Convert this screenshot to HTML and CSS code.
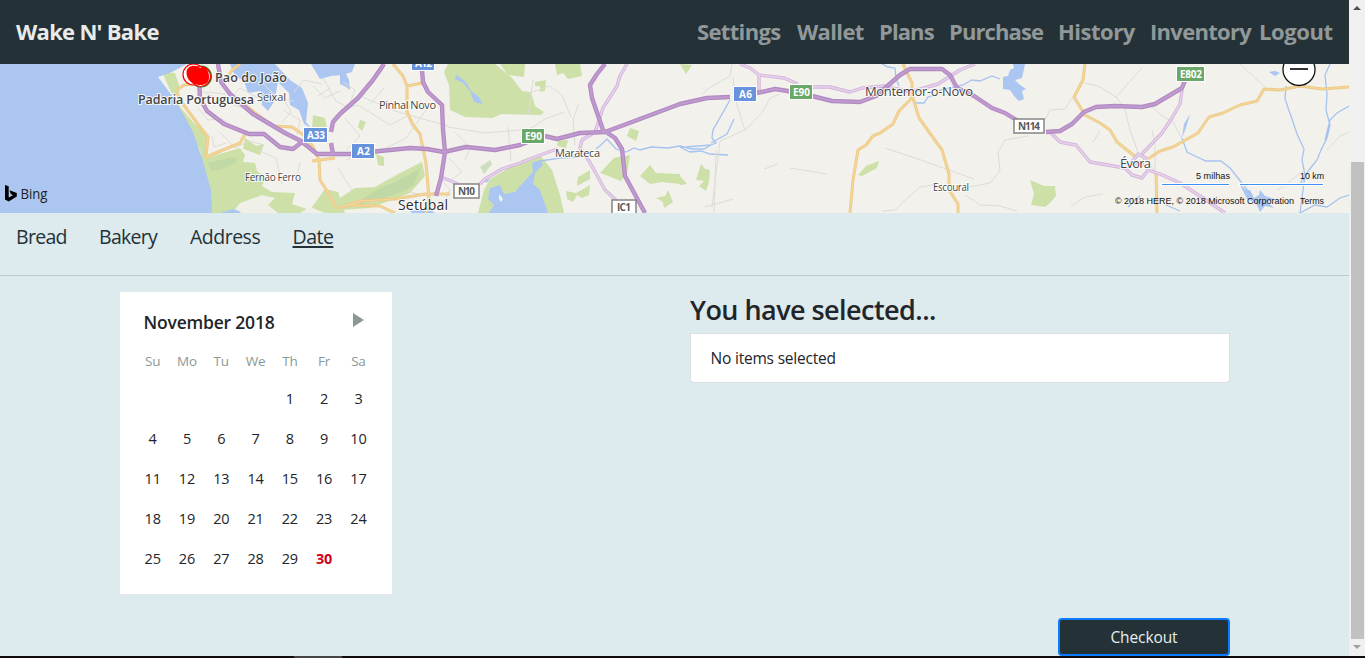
FILE: index.html
```html
<!DOCTYPE html>
<html lang="en">
<head>
<meta charset="utf-8">
<title>Wake N' Bake</title>
<link rel="stylesheet" href="styles.css">
</head>
<body>
<div class="window">
  <div class="page">
    <nav class="navbar">
      <a class="brand">Wake N' Bake</a>
      <div class="nav-links">
        <a class="settings">Settings</a><a class="wallet">Wallet</a><a class="plans">Plans</a><a class="purchase">Purchase</a><a class="history">History</a><a class="inventory">Inventory</a><a class="logout">Logout</a>
      </div>
    </nav>
    <svg class="map" width="1349" height="149" viewBox="0 64 1349 149">
      <rect class="land" x="0" y="64" width="1349" height="149"/>
      <!-- forests and parks -->
      <g class="forest">
        <path d="M172 96 L181 108 193 122 208 135 206 158 240 148 245 155 243 162 255 163 257 171 266 177 262 186 272 192 295 193 292 204 310 210 325 189 338 192 345 213 212 213 200 150Z"/>
        <path d="M162 72 L175 73 180 88 178 98 171 92Z"/>
        <path d="M313 115 L325 118 328 135 312 128Z"/>
        <path d="M375 187 L400 173 422 162 425 176 410 193 370 208 340 210 340 198 355 188Z"/>
        <path d="M245 138 L256 146 264 144 260 155 243 149Z"/>
        <path d="M448 64 L495 64 512 78 522 91 531 92 535 106 544 112 541 115 502 114 492 118 465 117 450 110 449 85 444 72Z"/>
        <path d="M500 64 L525 64 524 77 508 75Z"/>
        <path d="M555 64 L580 64 582 76 568 79 563 73 557 75Z"/>
        <path d="M535 82 L546 80 545 91 540 92 540 86 535 86Z"/>
        <path d="M490 179 L525 159 540 155 552 170 560 195 564 213 478 213 484 190Z"/>
        <path d="M600 173 L614 158 630 155 627 173 621 181 603 174Z"/>
        <path d="M630 128 L639 131 636 141 627 136Z M558 141 L568 140 566 148 557 146Z"/>
        <path d="M578 177 L590 170 590 179 577 186Z M566 191 L576 193 585 188 590 185 589 195 582 198 577 195 573 202 567 199Z M640 176 L650 165 656 173 680 174 680 184 662 182 650 184Z M656 198 L665 196 668 190 673 202 664 208 663 202Z"/>
        <path d="M680 64 L692 65 686 74Z M701 164 L705 169 710 170 709 182 706 191 699 186 704 181 696 180Z M680 176 L687 184 680 185Z"/>
        <path d="M858 175 L866 166 879 161 877 168 862 176Z"/>
        <path d="M1030 180 L1044 186 1055 186 1056 196 1050 203 1045 207 1031 205 1034 194Z"/>
        <path d="M360 120 L366 122 362 131 358 127Z M376 154 L384 157 384 166 378 165Z"/>
      </g>
      <g class="hill">
        <path d="M358 205 C370 188 390 188 420 168 L414 185 C399 195 380 199 358 205Z"/>
        <path d="M207 163 L235 157 237 162 220 170 212 171Z M480 167 L490 160 492 164 484 174Z"/>
      </g>
      <path class="town" d="M232 213 L240 203 262 195 275 198 268 205 278 213Z M300 213 L310 207 325 213Z"/>
      <!-- sea, estuaries and lakes -->
      <g class="water">
        <path d="M0 64 H187 L172 72 158 77 173 97 182 112 193 132 202 158 211 190 212 213 H0Z"/>
        <path d="M230 64 H275 L290 80 302 88 308 103 306 122 311 128 304 124 299 110 290 105 289 93 278 82 274 102 268 111 262 105 261 91 248 93 244 81 235 76Z"/>
        <path d="M311 64 H355 L352 72 342 75 331 76 320 79Z"/>
        <path d="M340 68 L345 72 349 80 350 90 346 87 340 84Z"/>
        <path d="M490 188 L500 185 504 194 515 192 521 185 533 172 532 163 540 160 543 165 535 173 533 184 540 190 548 213 489 213 494 205 488 199Z"/>
        <path d="M456 75 L466 82 471 91 478 96 483 104 474 102 470 91 463 83 455 79Z"/>
        <path d="M1003 77 L1008 76 1010 70 1014 68 1013 64 1025 64 1022 78 1015 80 1020 85 1026 89 1022 91 1024 99 1019 101 1014 96 1010 90 1003 89Z"/>
        <path d="M1190 114 L1186 128 1182 138 1184 124Z M1269 72 L1275 71 1280 73 1275 76Z"/>
        <path d="M1239 183 L1246 190 1250 190 1254 198 1259 195 1260 190 1265 196 1274 199 1267 202 1274 208 1265 206 1260 212 1256 203 1247 199Z"/>
        <path d="M220 213 L233 209 239 211 241 213Z M410 211 L430 209 435 213H412Z M484 178 L490 180 486 183Z"/>
      </g>
      <path class="islet" d="M178 69 L190 66 196 78 183 86Z M499 194 L503 199 501 202 499 199Z"/>
      <!-- rivers -->
      <g class="river">
        <path d="M540 161 L560 158 580 157 592 151 M596 149 L603 143 607 139 616 149 626 152 634 148 640 150 651 147 668 148 680 146 692 149 704 149 711 145 716 143 712 138 713 130 730 100 M711 143 L727 134 734 119 M680 147 L690 152 701 151 710 154 728 155 M686 147 L711 145"/>
        <path d="M882 64 L888 67 895 68 896 78 899 86 M910 97 L916 103 924 103 928 97 935 95 940 90 963 85 972 80 980 81 992 76 1000 79"/>
        <path d="M1182 138 L1187 152 1195 156 1206 161 1221 161 1230 168 1238 178 1252 196 M1286 86 L1285 99 1292 119 1297 134 1304 149 1302 160 1305 175 1303 190 1300 213 M1330 64 L1325 75 1327 94 1326 110 1330 125 1327 138 1321 150 1317 160 1309 170 1300 184 M1349 106 L1337 113 1330 120 1325 140 M1349 195 L1340 198 1327 207 1315 205 1300 213"/>
        <path d="M1140 196 L1128 207 M1166 205 L1180 211"/>
      </g>
      <!-- minor roads -->
      <g class="lane">
        <path d="M200 90 L220 100 240 107 255 114 M220 132 L235 148 249 141 264 145 M283 110 L300 120 297 135 M258 150 L276 158 282 185 M340 110 L358 105 390 125 407 116 M343 82 L355 90 349 105 M358 95 L395 111 430 121 448 126 M382 150 L406 138 426 110 M448 127 L485 133 530 129 545 119 564 112 M508 127 L511 161 M528 115 L533 80 M455 132 L470 147 465 160 M532 92 L550 86 562 95 571 117 M579 103 L573 120 575 145"/>
        <path d="M732 64 L730 76 706 90 703 94 M733 77 L735 98 742 121 745 130 720 141 712 207 M745 130 L762 113 770 98 780 94 M716 150 L714 213 M705 207 L733 199 M882 211 L895 210 904 201 920 187 933 185 M969 187 L990 183 1000 171 998 152 1005 140 1028 136 M965 195 L980 205 1000 206 1017 211 M885 148 L924 161 974 179 M764 169 L778 164 M790 168 L827 174"/>
        <path d="M1045 120 L1050 110 1065 109 1072 98 M1084 83 L1098 86 1116 97 1125 109 1130 130 1138 152 M1116 97 L1142 68 M1240 64 L1265 87 M1150 105 L1162 116 1173 122 1182 139 M1071 206 L1085 197 1103 194 M1100 131 L1093 142 M1327 150 L1340 136 1349 132 M1278 190 L1306 169 M1150 164 L1155 172 1155 145 1152 130"/>
        <path d="M346 160 L370 150 400 149 M440 178 L450 190 442 205 M410 192 L426 196 436 192 M260 76 L267 88 281 99 294 101 M313 86 L325 98 340 91 M323 78 L336 101 347 107 M338 168 L352 190"/>
        <path d="M198 108 L208 120 222 119 235 128 M212 136 L214 147 226 143 M232 96 L240 88 258 98 M207 92 L226 94 M282 96 L291 112 282 122 M294 92 L303 80 322 84 M318 96 L330 88 M300 162 L296 182 M345 118 L360 136 346 150 M370 104 L384 88 M449 158 L462 172 450 181"/>
      </g>
      <!-- regional roads -->
      <g class="road-case">
        <path id="r1" d="M177 92 L180 100 200 127 208 137 206 157 240 143 247 131 M177 90 L184 85 200 83 M240 101 L262 118 274 126 292 127 305 136 313 147 319 160 320 180 329 194 337 209 M312 161 L335 158 M226 80 L232 70 240 64"/>
        <path id="r2" d="M393 64 L403 76 407 86 407 112 413 125 420 134 426 163 429 198 426 213 M407 86 L422 83 M340 208 L360 201 395 199 425 194 450 194 M395 213 L380 206 345 205"/>
        <path id="r3" d="M903 64 L912 83 912 98 899 111 893 124 880 133 873 136 866 145 858 150 853 180 850 213 M913 98 L919 118 942 150 949 174 949 190 958 204 958 213"/>
        <path id="r4" d="M1085 64 L1083 80 1074 97 1085 115 1100 123 1110 130 1117 142 1137 158 M1148 159 L1160 151 1173 147 1198 133 1209 117 1223 113 1240 105 1257 101 1264 89 1280 90 1300 86 1322 89 1349 87 M1156 172 L1157 213"/>
      </g>
      <g class="road">
        <use href="#r1"/><use href="#r2"/><use href="#r3"/><use href="#r4"/>
      </g>
      <!-- secondary motorways -->
      <g class="link-case">
        <path id="l1" d="M627 64 L620 76 617 86 603 108 595 132 582 140 580 148 589 161 599 179 605 190 616 200 M480 184 L485 179 502 169 520 163 535 157 557 149 M441 177 L458 184"/>
        <path id="l2" d="M740 64 L750 68 759 75 784 78 798 84 M812 87 L830 87 850 92 862 88 885 86 910 92 938 84 960 70 975 64 M759 74 L759 92"/>
        <path id="l3" d="M1050 132 L1060 142 1076 145 1090 162 1125 168 M1182 90 L1180 104 1172 118 1162 133 1142 154 M1138 154 L1146 158 1142 165 1132 162Z M1125 168 L1132 175 1142 178 1148 170 1160 174 1180 183 1203 198 1225 213"/>
      </g>
      <g class="link"><use href="#l1"/><use href="#l2"/><use href="#l3"/></g>
      <!-- motorways -->
      <g class="motorway-case">
        <path id="m1" d="M199 80 L200 98 207 111 224 124 249 134 264 134 280 147 293 149 302 142 M218 64 L221 82 230 94 253 114 285 133 301 141 317 154 350 154 380 151 410 148 427 149 444 152 466 147 495 150 520 145 530 141 M331 143 L333 154 M331 132 L333 122 340 114 358 98 373 80 384 64"/>
        <path id="m2" d="M422 70 L423 82 428 92 442 105 443 130 445 152 441 178 436 196 M545 136 L557 139 580 133 605 132 632 122 680 104 707 98 730 97 M605 64 L597 74 590 85 592 98 603 130 615 138 622 149 625 176 645 213"/>
        <path id="m3" d="M757 93 L775 89 800 93 M812 96 L832 101 860 102 876 96 900 75 910 69 942 69 950 75 957 88 974 96 992 108 1005 113 1018 121 M1046 132 L1060 131 1072 124 1084 112 1096 107 1115 106 1142 107 1155 104 1182 88 1186 78"/>
      </g>
      <g class="motorway"><use href="#m1"/><use href="#m2"/><use href="#m3"/></g>
      <!-- road shields -->
      <g class="shield">
        <rect class="blue" x="411.500" y="54.500" width="23" height="16"/><text x="415" y="67" textLength="17">A12</text>
        <rect class="blue" x="303.500" y="127.500" width="24" height="15"/><text x="307" y="139" textLength="18">A33</text>
        <rect class="blue" x="351.500" y="143.500" width="23" height="15"/><text x="357" y="155" textLength="13">A2</text>
        <rect class="blue" x="733.500" y="86.500" width="23" height="15"/><text x="739" y="98" textLength="13">A6</text>
        <rect class="green" x="521.500" y="128.500" width="23" height="15"/><text x="525" y="140" textLength="17">E90</text>
        <rect class="green" x="789.500" y="84.500" width="23" height="15"/><text x="793" y="96" textLength="17">E90</text>
        <rect class="green" x="1176.500" y="66.500" width="28" height="15"/><text x="1180" y="78" textLength="22">E802</text>
        <g class="plain">
          <rect x="454" y="184" width="25" height="14"/><text x="458" y="195" textLength="17">N10</text>
          <rect x="612" y="200" width="24" height="16"/><text x="617" y="211" textLength="14">IC1</text>
          <rect x="1014" y="119" width="30" height="14"/><text x="1018" y="130" textLength="22">N114</text>
        </g>
      </g>
      <!-- place names -->
      <g class="place">
        <text x="257" y="101" font-size="11" textLength="29">Seixal</text>
        <text x="245" y="181" font-size="10" textLength="56">Fernão Ferro</text>
        <text x="379" y="109" font-size="11" textLength="57">Pinhal Novo</text>
        <text x="555" y="157" font-size="11" textLength="45">Marateca</text>
        <text class="city" x="398" y="210" font-size="14" textLength="50">Setúbal</text>
        <text x="865" y="96" font-size="13" textLength="108">Montemor-o-Novo</text>
        <text x="933" y="191" font-size="10" textLength="36">Escoural</text>
        <text x="1120" y="168" font-size="13" textLength="31">Évora</text>
      </g>
      <!-- bakery pins -->
      <g class="pins">
        <circle class="pin-green" cx="201" cy="76.500" r="9.500"/>
        <circle cx="193.500" cy="74.500" r="10.500"/>
        <circle cx="200.500" cy="76.500" r="10"/>
        <path d="M186.500 72 C187 65 196 64 200 68 C205 65 209 70 209 77 C209 83 206 85 200 85 C192 85 186 79 186.500 72Z"/>
      </g>
      <g class="bakery">
        <text x="215" y="82" textLength="72">Pao do João</text>
        <text x="138" y="104" textLength="116">Padaria Portuguesa</text>
      </g>
      <!-- provider mark, scale and zoom control -->
      <path d="M5 185 L8.700 186.300 V197.500 L13 195.200 10.800 194 9.500 190.300 16.800 193 V196.600 L8.700 201.500 5 199.500Z"/>
      <text class="bing" x="20.500" y="199" textLength="27" lengthAdjust="spacingAndGlyphs">Bing</text>
      <g class="scale">
        <path class="scale-halo" d="M1161 184.500 H1230 M1239 184.500 H1324"/>
        <path class="scale-line" d="M1162 184.500 H1229 M1240 184.500 H1323"/>
        <text x="1196" y="179" textLength="34" lengthAdjust="spacingAndGlyphs">5 milhas</text>
        <text x="1300" y="179" textLength="24" lengthAdjust="spacingAndGlyphs">10 km</text>
        <text x="1115" y="204" textLength="179" lengthAdjust="spacingAndGlyphs">© 2018 HERE, © 2018 Microsoft Corporation</text>
        <text x="1300" y="204" textLength="24" lengthAdjust="spacingAndGlyphs">Terms</text>
      </g>
      <circle class="zoom" cx="1299" cy="69.500" r="16"/>
      <path class="minus" d="M1290 69 H1308"/>
    </svg>
    <div class="steps">
      <a class="bread">Bread</a><a class="bakery-step">Bakery</a><a class="address">Address</a><a class="active">Date</a>
    </div>
    <main class="content">
      <section class="calendar">
        <header class="cal-head"><span>November 2018</span><i class="next"></i></header>
        <div class="weekdays"><b>Su</b><b>Mo</b><b>Tu</b><b>We</b><b>Th</b><b>Fr</b><b>Sa</b></div>
        <div class="days">
          <span class="first">1</span><span>2</span><span>3</span>
          <span>4</span><span>5</span><span>6</span><span>7</span><span>8</span><span>9</span><span>10</span>
          <span>11</span><span>12</span><span>13</span><span>14</span><span>15</span><span>16</span><span>17</span>
          <span>18</span><span>19</span><span>20</span><span>21</span><span>22</span><span>23</span><span>24</span>
          <span>25</span><span>26</span><span>27</span><span>28</span><span>29</span><span class="today">30</span>
        </div>
      </section>
      <section class="summary">
        <h2>You have selected...</h2>
        <div class="card">No items selected</div>
        <button class="checkout">Checkout</button>
      </section>
    </main>
  </div>
  <div class="scrollbar"><i class="up"></i><i class="thumb"></i><i class="down"></i></div>
</div>
<div class="taskbar"><i></i></div>
</body>
</html>
```
FILE: styles.css
```css
* { box-sizing: border-box; }
body { margin: 0; height: 658px; overflow: hidden; font-family: "Open Sans", "Noto Sans", sans-serif; color: #212529; background: #ddeaee; }
.window { display: flex; height: 656px; }
.page { width: 1349px; height: 656px; display: flex; flex-direction: column; }
.navbar { height: 64px; flex: none; background: #243237; display: flex; justify-content: space-between; align-items: center; padding: 0 16px 2px; font-size: 22px; font-weight: 700; color: #919899; white-space: nowrap; }
.brand { color: #e9ebeb; letter-spacing: -0.7px; }
.nav-links { display: flex; gap: 16px; letter-spacing: -0.65px; }
.settings { width: 84px; }
.wallet { width: 66px; }
.plans { width: 54px; letter-spacing: -0.9px; }
.purchase { width: 93px; letter-spacing: -0.9px; }
.history { width: 76px; letter-spacing: -0.5px; }
.inventory { width: 101px; letter-spacing: -0.7px; }
.logout { width: 74px; margin-left: -8px; letter-spacing: -0.4px; }

.map { display: block; flex: none; font-family: "Open Sans", "Noto Sans", sans-serif; }
.land { fill: #f2f1ec; }
.islet { fill: #f2f1ec; }
.town { fill: #f0efe8; }
.forest { fill: #cde0a8; }
.hill { fill: #b9d3a5; opacity: .6; }
.water { fill: #aac6f1; }
.river { fill: none; stroke: #a5c3ef; stroke-width: 1.3; }
.lane { fill: none; stroke: #dedcd8; stroke-width: 1; }
.road-case { fill: none; stroke: #ecca8b; stroke-width: 3; stroke-linejoin: round; }
.road { fill: none; stroke: #f6d795; stroke-width: 1.2; }
.link-case { fill: none; stroke: #d3b4dc; stroke-width: 3.4; stroke-linejoin: round; }
.link { fill: none; stroke: #e6d2eb; stroke-width: 1.6; }
.motorway-case { fill: none; stroke: #b18ac2; stroke-width: 4.4; stroke-linejoin: round; }
.motorway { fill: none; stroke: #c09acf; stroke-width: 2.2; stroke-linejoin: round; }
.shield { font-size: 10px; font-weight: 700; fill: #fff; }
.shield .blue { fill: #6693dc; stroke: #fff; }
.shield .green { fill: #6aa86a; stroke: #fff; }
.shield .plain { fill: #5a5a5a; }
.plain rect { fill: #fff; stroke: #858585; stroke-width: 1.5; }
.place { fill: #454545; stroke: #fff; stroke-width: 2; stroke-opacity: .8; paint-order: stroke; }
.place .city { fill: #2c2c2c; }
.bakery { font-size: 12.5px; font-weight: 600; fill: #444; stroke: #fff; stroke-width: 2; stroke-opacity: .85; paint-order: stroke; }
.pins circle { fill: #fff; stroke: #f00; stroke-width: 1.2; }
.pins .pin-green { stroke: #228022; stroke-width: 3; }
.pins path { fill: #f00; }
.bing { font-size: 14.5px; fill: #222; }
.scale { font-family: "Liberation Sans", Arial, sans-serif; font-size: 9.5px; fill: #111; }
.scale-halo { stroke: #fff; stroke-width: 3; }
.scale-line { stroke: #3d8ff5; stroke-width: 1.2; }
.zoom { fill: #fff; stroke: #111; stroke-width: 1.3; }
.minus { stroke: #333; stroke-width: 2; }
.map text { white-space: pre; }

.steps { height: 63px; flex: none; display: flex; padding: 10px 16px 0; border-bottom: 1px solid #bfcbd1; font-size: 19.500px; line-height: 27px; letter-spacing: -0.7px; color: #243237; white-space: nowrap; }
.bread { width: 83px; }
.bakery-step { width: 91px; }
.address { width: 102.500px; letter-spacing: -0.500px; }
.active { letter-spacing: -0.500px; text-decoration: underline; text-decoration-thickness: 2px; text-underline-offset: 2px; }

.content { display: flex; padding: 16px 119px 0 120px; justify-content: space-between; }
.calendar { width: 272px; height: 302px; background: #fff; padding: 18px 16px; }
.cal-head { display: flex; justify-content: space-between; align-items: flex-start; padding: 0 12.500px 0 7.500px; height: 41px; font-size: 17.500px; line-height: 25px; font-weight: 600; letter-spacing: -0.2px; }
.next { margin-top: 3px; border-left: 11px solid #8b9898; border-top: 7px solid transparent; border-bottom: 7px solid transparent; }
.weekdays, .days { display: grid; grid-template-columns: repeat(7, 34.3px); margin-left: -0.500px; text-align: center; }
.weekdays b { font-size: 13.500px; line-height: 20px; font-weight: 400; letter-spacing: -0.2px; color: #8b9898; }
.days { grid-auto-rows: 40px; line-height: 40px; margin-top: 8px; font-size: 14.500px; letter-spacing: -0.2px; }
.first { grid-column: 5; }
.today { color: #d0021b; font-weight: 700; }
.summary { width: 540px; display: flex; flex-direction: column; }
.summary h2 { margin: 0; height: 41px; font-size: 27px; line-height: 36px; font-weight: 600; letter-spacing: -0.550px; }
.card { height: 50px; padding: 0 19.500px; background: #fff; border: 1px solid #dcdfe0; border-radius: 0 0 4px 4px; font-size: 15.500px; line-height: 48px; letter-spacing: -0.2px; }
.checkout { align-self: flex-end; width: 172px; height: 38px; margin-top: 235px; border: 2px solid #0b7bff; border-radius: 4px; background: #243237; color: #e9edee; font: 15.500px/33px "Open Sans", sans-serif; letter-spacing: -0.1px; padding: 0; }

.scrollbar { width: 16px; background: #f0f0f0; display: flex; flex-direction: column; align-items: center; }
.up { margin-top: 6px; border: 4px solid transparent; border-top: 0; border-bottom-color: #505050; }
.thumb { width: 13px; height: 477px; margin-top: 152px; background: #c1c1c1; }
.down { margin-top: 6px; border: 4px solid transparent; border-bottom: 0; border-top-color: #a0a0a0; }
.taskbar { height: 2px; background: #110b0d; padding-left: 294px; }
.taskbar i { display: block; width: 48px; height: 2px; background: #474244; }
```
